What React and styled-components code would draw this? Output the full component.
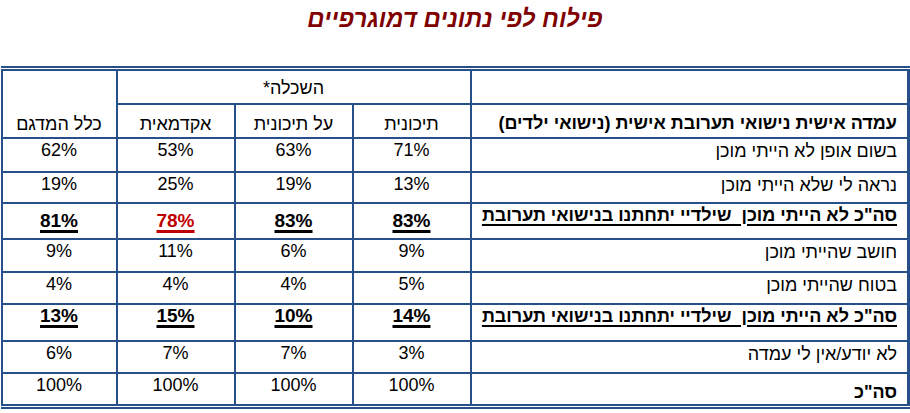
import React from "react";
import styled, { createGlobalStyle } from "styled-components";

const GlobalStyle = createGlobalStyle`
  body {
    margin: 0;
    background: #ffffff;
    font-family: "Liberation Sans", Arial, sans-serif;
  }
`;

const LINE = "#27508b";

const columns = [438, 118, 118, 118, 115];

const rows = [
  { label: "בשום אופן לא הייתי מוכן", values: ["71%", "63%", "53%", "62%"], h: 34 },
  { label: "נראה לי שלא הייתי מוכן", values: ["13%", "19%", "25%", "19%"], h: 31 },
  {
    label: "סה\"כ לא הייתי מוכן  שילדיי יתחתנו בנישואי תערובת",
    values: ["83%", "83%", "78%", "81%"],
    h: 36,
    total: true,
    pad: 6,
    red: 2,
  },
  { label: "חושב שהייתי מוכן", values: ["9%", "6%", "11%", "9%"], h: 33 },
  { label: "בטוח שהייתי מוכן", values: ["5%", "4%", "4%", "4%"], h: 32 },
  {
    label: "סה\"כ לא הייתי מוכן  שילדיי יתחתנו בנישואי תערובת",
    values: ["14%", "10%", "15%", "13%"],
    h: 37,
    total: true,
    pad: 0,
  },
  { label: "לא יודע/אין לי עמדה", values: ["3%", "7%", "7%", "6%"], h: 32 },
  { label: "סה\"כ", values: ["100%", "100%", "100%", "100%"], h: 34, sum: true },
];

const App = () => {
  return (
    <>
      <GlobalStyle />
      <Page dir="rtl">
        <Title>פילוח לפי נתונים דמוגרפיים</Title>
        <Table>
          <colgroup>
            {columns.map((w, i) => (
              <Col key={i} $w={w} />
            ))}
          </colgroup>
          <thead>
            <Row $h={35}>
              <LabelHead />
              <GroupHead colSpan={3}>השכלה*</GroupHead>
              <ColHead rowSpan={2}>כלל המדגם</ColHead>
            </Row>
            <Row $h={34}>
              <LabelHead>עמדה אישית נישואי תערובת אישית (נישואי ילדים)</LabelHead>
              <ColHead>תיכונית</ColHead>
              <ColHead>על תיכונית</ColHead>
              <ColHead>אקדמאית</ColHead>
            </Row>
          </thead>
          <tbody>
            {rows.map((r, i) => (
              <Row key={i} $h={r.h}>
                <Label $total={r.total} $sum={r.sum}>
                  {r.label}
                </Label>
                {r.values.map((v, j) => (
                  <Value key={j} $total={r.total} $pad={r.pad} $red={r.red === j}>
                    {v}
                  </Value>
                ))}
              </Row>
            ))}
          </tbody>
        </Table>
      </Page>
    </>
  );
};

const Page = styled.div`
  width: 910px;
  height: 413px;
  overflow: hidden;
  background: #ffffff;
`;

const Title = styled.h1`
  margin: 0;
  height: 66px;
  box-sizing: border-box;
  padding-top: 5px;
  text-align: center;
  font-family: "Liberation Sans", Arial, sans-serif;
  font-size: 24px;
  font-weight: bold;
  font-style: italic;
  line-height: 28px;
  color: #800000;
`;

const Table = styled.table`
  width: 909px;
  table-layout: fixed;
  border-collapse: collapse;
  border-top: 5px double ${LINE};
  border-bottom: 5px double ${LINE};
  border-right: 3px solid ${LINE};
  border-left: 2px solid ${LINE};
  color: #000000;
  font-size: 18px;
  line-height: 21px;

  td,
  th {
    border: 2px solid ${LINE};
    padding: 0;
  }
`;

const Col = styled.col`
  width: ${(p) => p.$w}px;
`;

const Row = styled.tr`
  height: ${(p) => p.$h}px;
`;

const LabelHead = styled.th`
  text-align: right;
  vertical-align: bottom;
  padding: 0 10px 3px 0 !important;
  font-weight: bold;
  font-size: 18px;
`;

const GroupHead = styled.th`
  text-align: center;
  vertical-align: middle;
  font-weight: normal;
  padding-top: 4px !important;
`;

const ColHead = styled.th`
  text-align: center;
  vertical-align: bottom;
  font-weight: normal;
  padding-bottom: 2px !important;
`;

const Label = styled.td`
  text-align: right;
  vertical-align: ${(p) => (p.$sum ? "bottom" : "top")};
  padding: ${(p) => (p.$sum ? "0 10px 1px 0" : p.$total ? "1px 10px 0 0" : "2px 10px 0 0")} !important;
  white-space: pre;
  font-weight: ${(p) => (p.$total || p.$sum ? "bold" : "normal")};
  text-decoration: ${(p) => (p.$total ? "underline" : "none")};
  text-decoration-thickness: 2px;
  text-underline-offset: 3px;
`;

const Value = styled.td`
  text-align: center;
  vertical-align: top;
  padding-top: ${(p) => (p.$total ? `${p.$pad}px` : "1px")} !important;
  font-weight: ${(p) => (p.$total ? "bold" : "normal")};
  font-size: ${(p) => (p.$total ? "19px" : "18px")};
  color: ${(p) => (p.$red ? "#c00000" : "#000000")};
  text-decoration: ${(p) => (p.$total ? "underline" : "none")};
  text-decoration-thickness: 3px;
  text-underline-offset: 3px;
`;

export default App;
